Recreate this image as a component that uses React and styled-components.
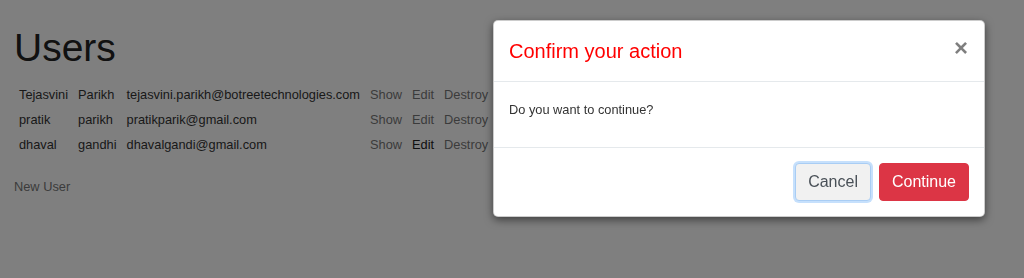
import React from "react";
import styled, { createGlobalStyle } from "styled-components";

const GlobalStyle = createGlobalStyle`
  html, body {
    margin: 0;
    padding: 0;
    background: #fff;
  }
  body {
    font-family: "Liberation Sans", Arial, Helvetica, sans-serif;
    font-size: 12.8px;
    color: #333;
  }
  * { box-sizing: border-box; }
`;

const Page = styled.main`
  padding: 24px 14px;
  min-height: 278px;
`;

const Title = styled.h1`
  margin: 0 0 11px;
  font-size: 39px;
  line-height: 47px;
  font-weight: 400;
  color: #222;
`;

const Table = styled.table`
  border-collapse: collapse;
  border-spacing: 0;
  margin: 0 0 21px;
`;

const Cell = styled.td`
  padding: 3px 5px;
  line-height: 19px;
  font-size: 12.8px;
  color: #333;
  white-space: nowrap;
`;

const Link = styled.a`
  color: ${(p) => (p.$hover ? "#222" : "#777")};
  text-decoration: none;
  cursor: pointer;
`;

const NewLink = styled.a`
  display: block;
  font-size: 12.8px;
  line-height: 18px;
  color: #777;
  text-decoration: none;
`;

const Backdrop = styled.div`
  position: fixed;
  inset: 0;
  background: rgba(0, 0, 0, 0.5);
`;

const Dialog = styled.div`
  position: absolute;
  left: 493px;
  top: 20px;
  width: 492px;
  background: #fff;
  border: 1px solid rgba(0, 0, 0, 0.2);
  border-radius: 5px;
  box-shadow: 0 3px 9px rgba(0, 0, 0, 0.5);
  display: flex;
  flex-direction: column;
`;

const Header = styled.div`
  display: flex;
  justify-content: space-between;
  align-items: flex-start;
  padding: 15px;
  border-bottom: 1px solid #e5e9ec;
`;

const ModalTitle = styled.h5`
  margin: 0;
  font-size: 20px;
  line-height: 30px;
  font-weight: 400;
  color: #ff0000;
`;

const Close = styled.button`
  border: 0;
  background: transparent;
  padding: 0;
  margin: 0 1px 0 0;
  font-family: "Liberation Sans", Arial, sans-serif;
  font-size: 24px;
  line-height: 24px;
  font-weight: 700;
  color: #000;
  opacity: 0.5;
  cursor: pointer;
`;

const Body = styled.div`
  padding: 16px 15px 25px;
  border-bottom: 1px solid #e5e9ec;
`;

const Message = styled.p`
  margin: 0;
  font-size: 12.8px;
  line-height: 24px;
  color: #333;
`;

const Footer = styled.div`
  display: flex;
  justify-content: flex-end;
  align-items: center;
  gap: 8px;
  padding: 15px;
`;

const Button = styled.button`
  font-family: "Liberation Sans", Arial, sans-serif;
  font-size: 16px;
  line-height: 24px;
  padding: 6px 12px;
  border-radius: 4px;
  cursor: pointer;
  border: 1px solid ${(p) => (p.$danger ? "#dc3545" : "#a9cdf4")};
  background: ${(p) => (p.$danger ? "#dc3545" : "#f1f1f1")};
  color: ${(p) => (p.$danger ? "#fff" : "#495057")};
  box-shadow: ${(p) => (p.$focus ? "0 0 0 2px #c6e0fc" : "none")};
`;

const users = [
  { first: "Tejasvini", last: "Parikh", email: "tejasvini.parikh@botreetechnologies.com" },
  { first: "pratik", last: "parikh", email: "pratikparik@gmail.com" },
  { first: "dhaval", last: "gandhi", email: "dhavalgandi@gmail.com", hoverEdit: true },
];

export default function App() {
  return (
    <>
      <GlobalStyle />
      <Page>
        <Title>Users</Title>
        <Table>
          <tbody>
            {users.map((u) => (
              <tr key={u.email}>
                <Cell>{u.first}</Cell>
                <Cell>{u.last}</Cell>
                <Cell>{u.email}</Cell>
                <Cell><Link>Show</Link></Cell>
                <Cell><Link $hover={u.hoverEdit}>Edit</Link></Cell>
                <Cell><Link>Destroy</Link></Cell>
              </tr>
            ))}
          </tbody>
        </Table>
        <NewLink>New User</NewLink>
      </Page>
      <Backdrop />
      <Dialog role="dialog">
        <Header>
          <ModalTitle>Confirm your action</ModalTitle>
          <Close aria-label="Close">×</Close>
        </Header>
        <Body>
          <Message>Do you want to continue?</Message>
        </Body>
        <Footer>
          <Button $focus>Cancel</Button>
          <Button $danger>Continue</Button>
        </Footer>
      </Dialog>
    </>
  );
}
